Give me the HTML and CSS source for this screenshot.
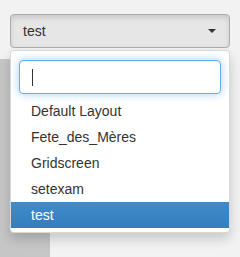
FILE: index.html
```html
<!DOCTYPE html>
<html>
<head>
    <title>Layout select</title>
    <link rel="stylesheet" href="styles.css">
</head>
<body>
    <div class="page">
        <div class="picker">
            <button class="picker-btn">
                <span class="picker-value">test</span>
                <span class="caret"></span>
            </button>
            <div class="picker-menu">
                <div class="searchbox">
                    <div class="search-input"><span class="text-cursor"></span></div>
                </div>
                <ul class="options">
                    <li>Default Layout</li>
                    <li>Fete_des_Mères</li>
                    <li>Gridscreen</li>
                    <li>setexam</li>
                    <li class="active">test</li>
                </ul>
            </div>
        </div>
    </div>
</body>
</html>
```

FILE: styles.css
```css
html, body {
    margin: 0;
    height: 100%;
}

body {
    font-family: "Liberation Sans", Arial, sans-serif;
    font-size: 14px;
    color: #333;
    background-color: #f2f2f2;
}

.page {
    height: 100%;
    box-sizing: border-box;
    padding: 14px 10px 0 10px;
    background:
        linear-gradient(#f2f2f2, #f2f2f2) top left / 100% 59px no-repeat,
        linear-gradient(to right, #c6c6c6 50px, #f2f2f2 50px);
}

.picker-btn {
    display: flex;
    align-items: center;
    justify-content: space-between;
    width: 100%;
    height: 34px;
    padding: 6px 12px;
    font-family: inherit;
    font-size: 14px;
    line-height: 20px;
    color: #333;
    background-color: #e6e6e6;
    border: 1px solid #adadad;
    border-radius: 4px;
    box-shadow: inset 0 3px 5px rgba(0, 0, 0, .125);
    box-sizing: border-box;
}

.caret {
    width: 0;
    height: 0;
    margin-right: 1px;
    border-top: 4px solid #333;
    border-left: 4px solid transparent;
    border-right: 4px solid transparent;
}

.picker-menu {
    margin-top: 2px;
    padding: 5px 0 4px;
    background-color: #fff;
    border: 1px solid rgba(0, 0, 0, .15);
    border-radius: 4px;
    box-shadow: 0 6px 12px rgba(0, 0, 0, .175);
}

.searchbox {
    padding: 4px 8px;
}

.search-input {
    display: flex;
    align-items: center;
    height: 34px;
    padding: 0 12px;
    border: 1px solid #66afe9;
    border-radius: 4px;
    box-shadow: inset 0 1px 1px rgba(0, 0, 0, .075), 0 0 8px rgba(102, 175, 233, .6);
    box-sizing: border-box;
}

.text-cursor {
    width: 1px;
    height: 17px;
    background-color: #333;
}

.options {
    list-style: none;
    margin: 0;
    padding: 0;
}

.options li {
    padding: 3px 20px;
    line-height: 20px;
    white-space: nowrap;
}

.options li.active {
    color: #fff;
    background-image: linear-gradient(to bottom, #428bca 0%, #357ebd 100%);
}
```
